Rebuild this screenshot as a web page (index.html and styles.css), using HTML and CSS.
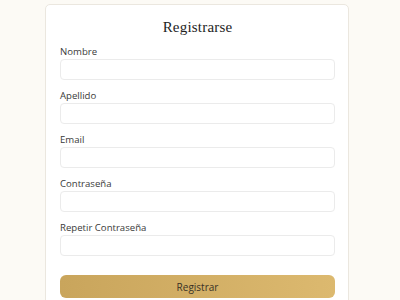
FILE: index.html
```html
<!DOCTYPE html>
<html lang="es">
<head>
    <meta charset="UTF-8">
    <title>Registrarse</title>
    <link rel="stylesheet" href="styles.css">
</head>
<body>
<div class="wrap">
    <form class="card">
        <h1 class="title">Registrarse</h1>
        <div class="field">
            <label>Nombre</label>
            <input type="text">
        </div>
        <div class="field">
            <label>Apellido</label>
            <input type="text">
        </div>
        <div class="field">
            <label>Email</label>
            <input type="email">
        </div>
        <div class="field">
            <label>Contraseña</label>
            <input type="password">
        </div>
        <div class="field">
            <label>Repetir Contraseña</label>
            <input type="password">
        </div>
        <button type="button" class="btn">Registrar</button>
    </form>
</div>
</body>
</html>
```

FILE: styles.css
```css
*{box-sizing:border-box;}
body{margin:0;background:#fcfaf5;font-family:"Open Sans","Liberation Sans",sans-serif;}
.wrap{padding:4px 0 0 45px;}
.card{width:304px;background:#fff;border:1px solid #ebe7df;border-radius:5px;padding:12px 13px 20px 14px;}
.title{margin:0 0 9px;text-align:center;font:15px/20px "Liberation Serif",serif;color:#1e1e1e;letter-spacing:0.2px;}
.field{margin-bottom:10px;}
.field label{display:block;font-size:9.6px;line-height:12px;color:#3a3a3a;margin-bottom:1px;}
.field input{display:block;width:100%;height:21px;border:1px solid #ebebeb;border-radius:4px;background:#fff;outline:none;}
.btn{display:block;width:100%;height:23px;margin-top:19px;border:0;border-radius:6px;background:linear-gradient(90deg,#c9a55c,#dcb96f);color:#3a3226;font:10px "Open Sans","Liberation Sans",sans-serif;}
```
